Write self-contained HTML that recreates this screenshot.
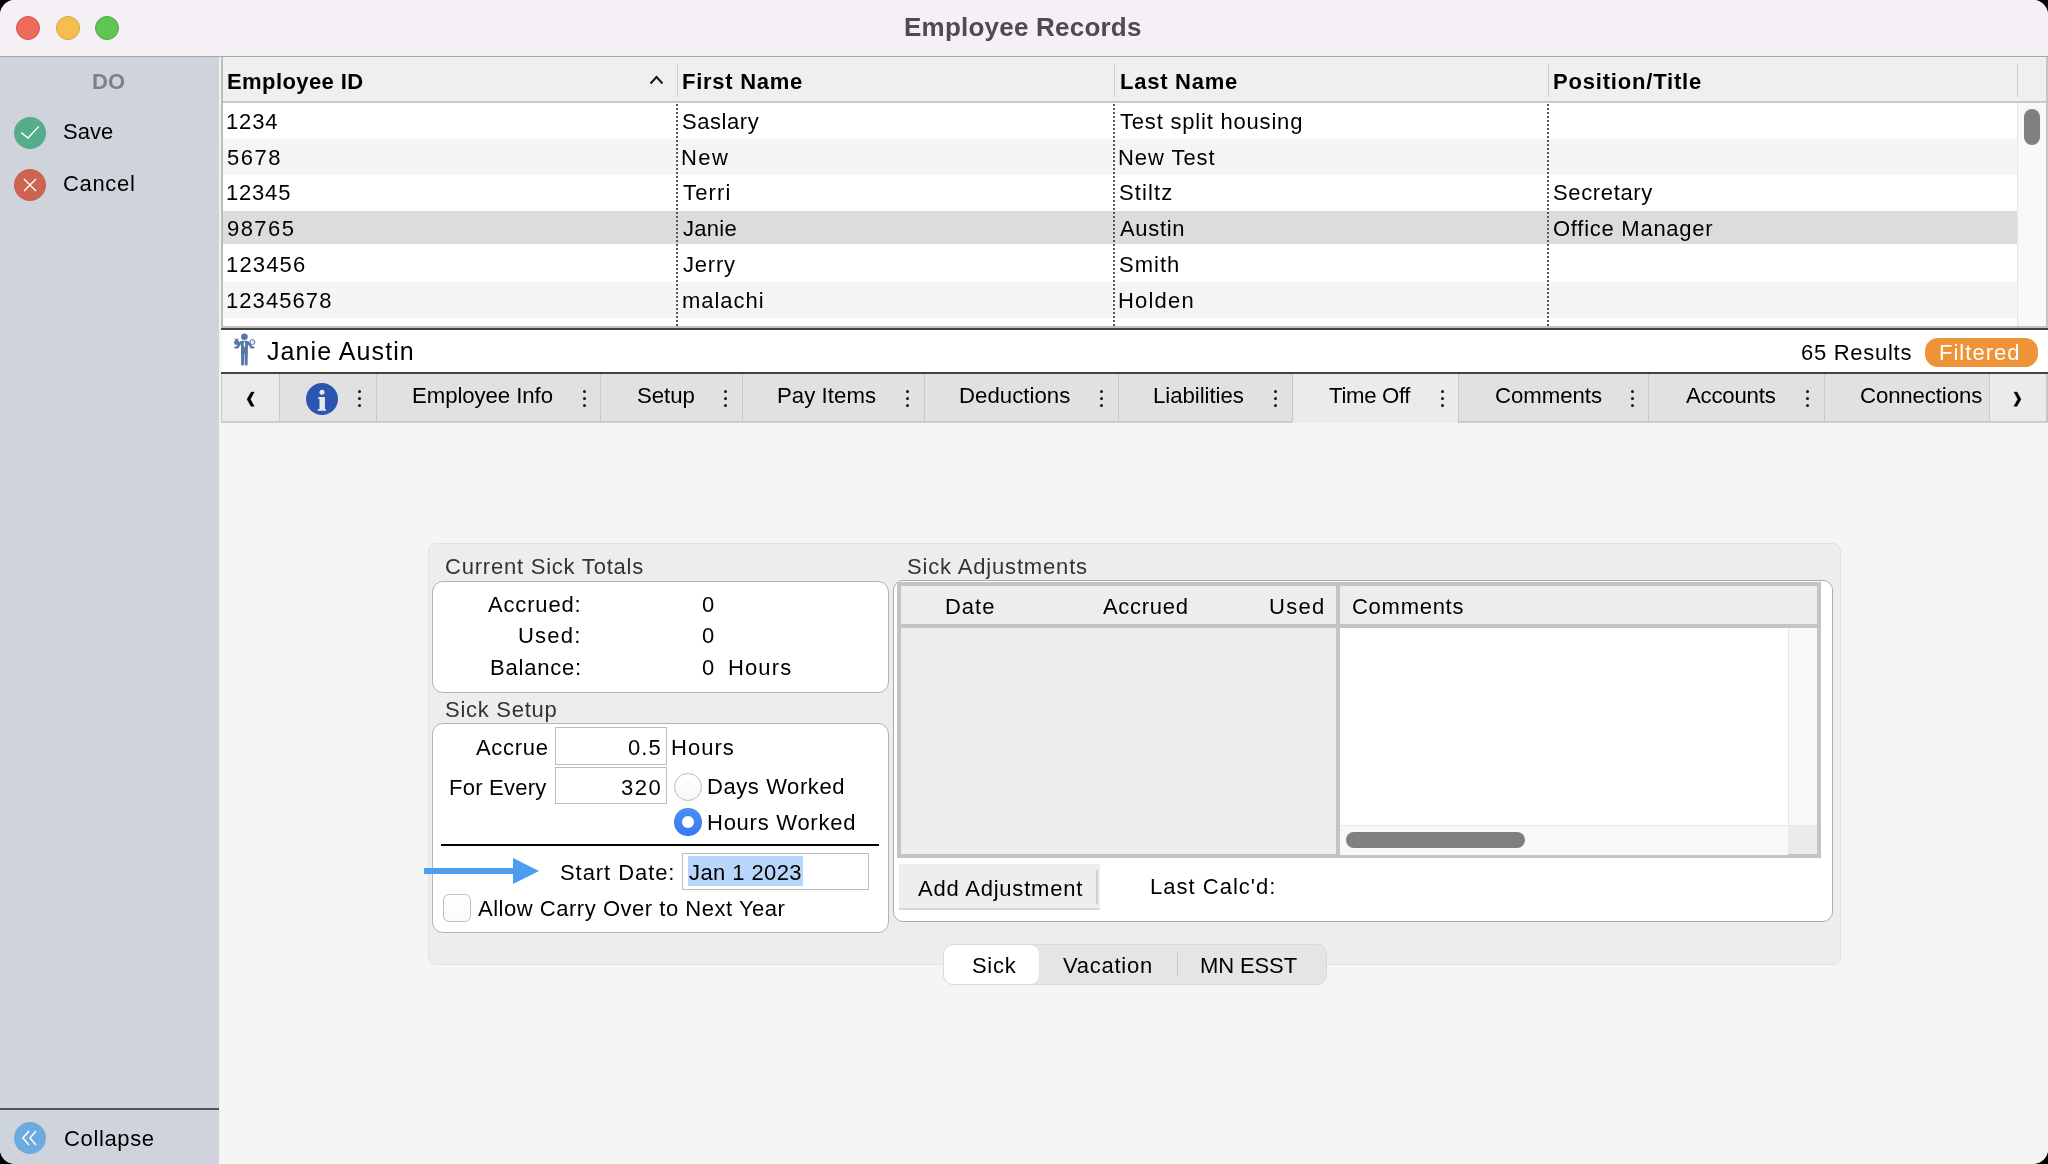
<!DOCTYPE html>
<html><head><meta charset="utf-8"><title>Employee Records</title>
<style>
html,body{margin:0;padding:0;width:2048px;height:1164px;overflow:hidden;background:#000;}
#win{position:absolute;left:0;top:0;width:2048px;height:1164px;border-radius:15px;overflow:hidden;background:#F5F5F5;}
.t{position:absolute;white-space:nowrap;line-height:1;will-change:transform;font-family:"Liberation Sans",sans-serif;}
.r{position:absolute;}
</style></head><body><div id="win">
<div class="r" style="left:0px;top:0px;width:2048px;height:56px;background:#F4F0F6;"></div>
<div class="r" style="left:0px;top:56px;width:2048px;height:1px;background:#A5A4A8;"></div>
<div class="r" style="left:0px;top:57px;width:2048px;height:1px;background:#B9BBC0;"></div>
<div class="r" style="left:16px;top:16px;width:24px;height:24px;border-radius:50%;background:#EC6A5E;box-sizing:border-box;border:1px solid #D5574B;"></div>
<div class="r" style="left:55.5px;top:16px;width:24px;height:24px;border-radius:50%;background:#F4BF4F;box-sizing:border-box;border:1px solid #D9A53A;"></div>
<div class="r" style="left:95px;top:16px;width:24px;height:24px;border-radius:50%;background:#61C554;box-sizing:border-box;border:1px solid #4DAA40;"></div>
<div class="r" style="left:0px;top:57px;width:219px;height:1107px;background:#CFD3DC;"></div>
<div class="r" style="left:219px;top:57px;width:2px;height:1107px;background:#F2F2F4;"></div>
<svg class="r" style="left:14px;top:117px" width="32" height="32" viewBox="0 0 32 32"><circle cx="16" cy="16" r="16" fill="#57AC8B"/><path d="M7.2 15.6 L14 21 L24.8 9.4" stroke="#fff" stroke-width="1.35" fill="none"/></svg>
<svg class="r" style="left:14px;top:169px" width="32" height="32" viewBox="0 0 32 32"><circle cx="16" cy="16" r="16" fill="#CD6351"/><path d="M10 10 L22 22 M22 10 L10 22" stroke="#fff" stroke-width="1.35" fill="none"/></svg>
<div class="r" style="left:0px;top:1108px;width:219px;height:2px;background:#555;"></div>
<svg class="r" style="left:14px;top:1122px" width="32" height="32" viewBox="0 0 32 32"><circle cx="16" cy="16" r="16" fill="#6DABDF"/><path d="M15 9 L9 16 L15 23 M22 9 L16 16 L22 23" stroke="#fff" stroke-width="1.5" fill="none"/></svg>
<div class="r" style="left:221px;top:57px;width:1827px;height:1107px;background:#F5F5F5;"></div>
<div class="r" style="left:221px;top:57px;width:1827px;height:271px;background:#FFFFFF;"></div>
<div class="r" style="left:221px;top:57px;width:2px;height:271px;background:#BDBDBD;"></div>
<div class="r" style="left:2046px;top:57px;width:2px;height:271px;background:#C4C4C4;"></div>
<div class="r" style="left:223px;top:57px;width:1823px;height:45px;background:#EFEFEF;"></div>
<div class="r" style="left:223px;top:101px;width:1823px;height:2px;background:#C8C8C8;"></div>
<div class="r" style="left:677px;top:64px;width:1px;height:33px;background:#CDCDCD;"></div>
<div class="r" style="left:1114px;top:64px;width:1px;height:33px;background:#CDCDCD;"></div>
<div class="r" style="left:1548px;top:64px;width:1px;height:33px;background:#CDCDCD;"></div>
<div class="r" style="left:2017px;top:64px;width:1px;height:33px;background:#CDCDCD;"></div>
<svg class="r" style="left:649px;top:74.5px" width="15" height="10" viewBox="0 0 15 10"><path d="M1.5 8.5 L7.5 2 L13.5 8.5" stroke="#111" stroke-width="1.9" fill="none"/></svg>
<div class="r" style="left:223px;top:139px;width:1794px;height:36px;background:#F4F5F5;"></div>
<div class="r" style="left:223px;top:211px;width:1794px;height:33px;background:#DCDCDC;"></div>
<div class="r" style="left:223px;top:282px;width:1794px;height:36px;background:#F4F5F5;"></div>
<div class="r" style="left:676px;top:104px;width:2px;height:222px;background:repeating-linear-gradient(to bottom,#575757 0 2px,transparent 2px 4px);"></div>
<div class="r" style="left:1113px;top:104px;width:2px;height:222px;background:repeating-linear-gradient(to bottom,#575757 0 2px,transparent 2px 4px);"></div>
<div class="r" style="left:1547px;top:104px;width:2px;height:222px;background:repeating-linear-gradient(to bottom,#575757 0 2px,transparent 2px 4px);"></div>
<div class="r" style="left:2017px;top:103px;width:29px;height:225px;background:#F8F8F8;"></div>
<div class="r" style="left:2017px;top:103px;width:1px;height:225px;background:#E6E6E6;"></div>
<div class="r" style="left:2024px;top:109px;width:16px;height:36px;background:#808080;border-radius:8px;"></div>
<div class="r" style="left:223px;top:326px;width:1823px;height:2px;background:#C2C2C2;"></div>
<div class="r" style="left:221px;top:328px;width:1827px;height:2px;background:#444;"></div>
<div class="r" style="left:221px;top:330px;width:1827px;height:42px;background:#FFFFFF;"></div>
<svg class="r" style="left:230px;top:331px" width="30" height="38" viewBox="0 0 30 38"><g fill="#5577A8"><circle cx="14.4" cy="5.8" r="3.3"/><path d="M11 10 Q14.4 9.4 17.8 10 Q19.5 10.6 20.5 12.5 L22.3 15.4 L23.6 15.4 Q24.6 15.6 24.6 16.5 Q24.6 17.4 23.6 17.4 L21.3 17.4 Q20.6 17.4 20.2 16.8 L17.9 13.2 L17.9 20.5 L17.6 33.4 Q17.5 34.4 16.7 34.4 L15.6 34.4 Q14.9 34.4 14.8 33.4 L14.6 22.5 L14.2 22.5 L14 33.4 Q13.9 34.4 13.2 34.4 L12.1 34.4 Q11.3 34.4 11.2 33.4 L11 20.5 L11 13.2 L8.6 16.8 Q8.2 17.4 7.5 17.4 L5.2 17.4 Q4.2 17.4 4.2 16.5 Q4.2 15.6 5.2 15.4 L6.5 15.4 L8.3 12.5 Q9.3 10.6 11 10 Z"/><circle cx="6.6" cy="11.6" r="2.5"/><path d="M5.7 9.4 L7.5 9.4 L8.7 7.6 L7.4 8.3 L6.6 7.8 L5.8 8.3 L4.5 7.6 Z" stroke="#5577A8" stroke-width="0.3"/><circle cx="22.4" cy="11" r="2.5" fill="none" stroke="#5577A8" stroke-width="1"/><path d="M22.4 9.6 L22.4 11.2 L23.4 11.8" stroke="#5577A8" stroke-width="0.6" fill="none"/></g><path d="M14.4 10.6 L15.2 12 L14.9 15.5 L14.4 16.6 L13.9 15.5 L13.6 12 Z" fill="#fff"/></svg>
<div class="r" style="left:1924.5px;top:338px;width:113px;height:29px;background:#EE9437;border-radius:13px;"></div>
<div class="r" style="left:221px;top:372px;width:1827px;height:2px;background:#444;"></div>
<div class="r" style="left:221px;top:374px;width:1827px;height:48px;background:#E1E1E1;"></div>
<div class="r" style="left:221px;top:421px;width:1827px;height:2px;background:#CCCCCC;"></div>
<div class="r" style="left:221px;top:374px;width:58px;height:47px;background:#EBEBEB;"></div>
<div class="r" style="left:1989px;top:374px;width:57px;height:47px;background:#EBEBEB;"></div>
<div class="r" style="left:1292px;top:374px;width:166px;height:49px;background:#EBEBEB;"></div>
<div class="r" style="left:2046px;top:374px;width:2px;height:49px;background:#C8C8C8;"></div>
<div class="r" style="left:221px;top:374px;width:1px;height:48px;background:#CACACA;"></div>
<div class="r" style="left:279px;top:374px;width:1px;height:48px;background:#CACACA;"></div>
<div class="r" style="left:376px;top:374px;width:1px;height:48px;background:#CACACA;"></div>
<div class="r" style="left:600px;top:374px;width:1px;height:48px;background:#CACACA;"></div>
<div class="r" style="left:742px;top:374px;width:1px;height:48px;background:#CACACA;"></div>
<div class="r" style="left:924px;top:374px;width:1px;height:48px;background:#CACACA;"></div>
<div class="r" style="left:1118px;top:374px;width:1px;height:48px;background:#CACACA;"></div>
<div class="r" style="left:1292px;top:374px;width:1px;height:48px;background:#CACACA;"></div>
<div class="r" style="left:1458px;top:374px;width:1px;height:48px;background:#CACACA;"></div>
<div class="r" style="left:1648px;top:374px;width:1px;height:48px;background:#CACACA;"></div>
<div class="r" style="left:1824px;top:374px;width:1px;height:48px;background:#CACACA;"></div>
<div class="r" style="left:1989px;top:374px;width:1px;height:48px;background:#CACACA;"></div>
<svg class="r" style="left:244px;top:390px" width="14" height="20" viewBox="0 0 14 20"><path d="M7.2 2 L10.2 2 L6.4 9.3 L10.2 16.3 L7 16.3 L3 9.3 Z" fill="#000" stroke="#000" stroke-width="0.4" stroke-linejoin="round"/></svg>
<svg class="r" style="left:2010px;top:390px" width="14" height="20" viewBox="0 0 14 20"><path d="M4 2 L7 2 L11 9.3 L7 16.3 L3.8 16.3 L7.8 9.3 Z" fill="#000" stroke="#000" stroke-width="0.4" stroke-linejoin="round"/></svg>
<svg class="r" style="left:306px;top:383px" width="32" height="32" viewBox="0 0 32 32"><circle cx="16" cy="16" r="16" fill="#2C55B1"/><circle cx="16" cy="9.3" r="2.5" fill="#E8E8EA"/><path d="M12.3 14 L18.9 14 L18.9 26 L20 26 L20 27.8 L11.8 27.8 L11.8 26 L13.5 26 L13.5 16 L12.3 16 Z" fill="#E8E8EA"/></svg>
<div class="r" style="left:358.1px;top:390.0px;width:3px;height:3px;background:#111;border-radius:50%;"></div>
<div class="r" style="left:358.1px;top:397.0px;width:3px;height:3px;background:#111;border-radius:50%;"></div>
<div class="r" style="left:358.1px;top:404.0px;width:3px;height:3px;background:#111;border-radius:50%;"></div>
<div class="r" style="left:582.5px;top:390.0px;width:3px;height:3px;background:#111;border-radius:50%;"></div>
<div class="r" style="left:582.5px;top:397.0px;width:3px;height:3px;background:#111;border-radius:50%;"></div>
<div class="r" style="left:582.5px;top:404.0px;width:3px;height:3px;background:#111;border-radius:50%;"></div>
<div class="r" style="left:724.2px;top:390.0px;width:3px;height:3px;background:#111;border-radius:50%;"></div>
<div class="r" style="left:724.2px;top:397.0px;width:3px;height:3px;background:#111;border-radius:50%;"></div>
<div class="r" style="left:724.2px;top:404.0px;width:3px;height:3px;background:#111;border-radius:50%;"></div>
<div class="r" style="left:905.7px;top:390.0px;width:3px;height:3px;background:#111;border-radius:50%;"></div>
<div class="r" style="left:905.7px;top:397.0px;width:3px;height:3px;background:#111;border-radius:50%;"></div>
<div class="r" style="left:905.7px;top:404.0px;width:3px;height:3px;background:#111;border-radius:50%;"></div>
<div class="r" style="left:1099.9px;top:390.0px;width:3px;height:3px;background:#111;border-radius:50%;"></div>
<div class="r" style="left:1099.9px;top:397.0px;width:3px;height:3px;background:#111;border-radius:50%;"></div>
<div class="r" style="left:1099.9px;top:404.0px;width:3px;height:3px;background:#111;border-radius:50%;"></div>
<div class="r" style="left:1274.1px;top:390.0px;width:3px;height:3px;background:#111;border-radius:50%;"></div>
<div class="r" style="left:1274.1px;top:397.0px;width:3px;height:3px;background:#111;border-radius:50%;"></div>
<div class="r" style="left:1274.1px;top:404.0px;width:3px;height:3px;background:#111;border-radius:50%;"></div>
<div class="r" style="left:1441.2px;top:390.0px;width:3px;height:3px;background:#111;border-radius:50%;"></div>
<div class="r" style="left:1441.2px;top:397.0px;width:3px;height:3px;background:#111;border-radius:50%;"></div>
<div class="r" style="left:1441.2px;top:404.0px;width:3px;height:3px;background:#111;border-radius:50%;"></div>
<div class="r" style="left:1631.0px;top:390.0px;width:3px;height:3px;background:#111;border-radius:50%;"></div>
<div class="r" style="left:1631.0px;top:397.0px;width:3px;height:3px;background:#111;border-radius:50%;"></div>
<div class="r" style="left:1631.0px;top:404.0px;width:3px;height:3px;background:#111;border-radius:50%;"></div>
<div class="r" style="left:1805.8px;top:390.0px;width:3px;height:3px;background:#111;border-radius:50%;"></div>
<div class="r" style="left:1805.8px;top:397.0px;width:3px;height:3px;background:#111;border-radius:50%;"></div>
<div class="r" style="left:1805.8px;top:404.0px;width:3px;height:3px;background:#111;border-radius:50%;"></div>
<div class="r" style="left:427.5px;top:542.5px;width:1413px;height:422px;background:#EDEDED;border:1px solid #E2E2E2;border-radius:8px;box-sizing:border-box;"></div>
<div class="r" style="left:431.5px;top:580.5px;width:457px;height:112px;background:#fff;border:1px solid #B4B4B4;border-radius:11px;box-sizing:border-box;"></div>
<div class="r" style="left:431.5px;top:723px;width:457px;height:210px;background:#fff;border:1px solid #B4B4B4;border-radius:11px;box-sizing:border-box;"></div>
<div class="r" style="left:555px;top:727px;width:112px;height:38px;background:#fff;border:1px solid #BDBDBD;box-sizing:border-box;"></div>
<div class="r" style="left:555px;top:767px;width:112px;height:37px;background:#fff;border:1px solid #BDBDBD;box-sizing:border-box;"></div>
<div class="r" style="left:674.2px;top:773px;width:27.6px;height:27.6px;background:linear-gradient(#fff,#F6F6F6);border:1.5px solid #BDBDBD;border-radius:50%;box-sizing:border-box;"></div>
<div class="r" style="left:674.3px;top:808.4px;width:27.6px;height:27.6px;background:linear-gradient(#4B8FF6,#3A77EE);border-radius:50%;"></div>
<div class="r" style="left:682.1px;top:816.2px;width:12px;height:12px;background:#fff;border-radius:50%;"></div>
<div class="r" style="left:441px;top:844px;width:438px;height:2px;background:#000;"></div>
<svg class="r" style="left:420px;top:855px" width="125" height="32" viewBox="0 0 125 32"><path d="M4 13 L94 13 L94 19 L4 19 Z" fill="#4A9DF0"/><path d="M93 3 L119 16 L93 29 Z" fill="#4A9DF0"/></svg>
<div class="r" style="left:682px;top:852.5px;width:187px;height:37px;background:#fff;border:1px solid #BDBDBD;box-sizing:border-box;"></div>
<div class="r" style="left:688px;top:856px;width:115px;height:30px;background:#B8D6FA;"></div>
<div class="r" style="left:443px;top:894px;width:28px;height:28px;background:linear-gradient(#fff,#FAFAFA);border:1.2px solid #BFBFBF;border-radius:6px;box-sizing:border-box;"></div>
<div class="r" style="left:893px;top:580px;width:940px;height:342px;background:#fff;border:1px solid #ABABAB;border-radius:10px;box-sizing:border-box;"></div>
<div class="r" style="left:897px;top:582px;width:924px;height:276px;background:#C4C4C4;"></div>
<div class="r" style="left:900.5px;top:585.5px;width:435.5px;height:38.5px;background:#EDEDED;"></div>
<div class="r" style="left:1340px;top:585.5px;width:477px;height:38.5px;background:#EDEDED;"></div>
<div class="r" style="left:900.5px;top:628px;width:435.5px;height:226px;background:#EDEDED;"></div>
<div class="r" style="left:1340px;top:628px;width:477px;height:226px;background:#FFFFFF;"></div>
<div class="r" style="left:1788px;top:628px;width:29px;height:197px;background:#F8F8F8;"></div>
<div class="r" style="left:1788px;top:628px;width:1px;height:197px;background:#E8E8E8;"></div>
<div class="r" style="left:1340px;top:824.5px;width:448px;height:30px;background:#F8F8F8;"></div>
<div class="r" style="left:1340px;top:824.5px;width:448px;height:1px;background:#E8E8E8;"></div>
<div class="r" style="left:1788px;top:825px;width:29px;height:29px;background:#EBEBEB;"></div>
<div class="r" style="left:1346px;top:832px;width:179px;height:16px;background:#7F7F7F;border-radius:8px;"></div>
<div class="r" style="left:899px;top:864px;width:201px;height:45.5px;background:#EEEEEE;border-bottom:2px solid #D6D6D6;box-sizing:border-box;"></div>
<div class="r" style="left:1096px;top:870px;width:2px;height:34px;background:#D0D0D0;"></div>
<div class="r" style="left:942.5px;top:944px;width:384px;height:41px;background:#E5E5E5;border:1px solid #D9D9D9;border-radius:10px;box-sizing:border-box;"></div>
<div class="r" style="left:943.5px;top:945px;width:95px;height:39px;background:#FFFFFF;border-radius:9px;"></div>
<div class="r" style="left:1176.5px;top:953px;width:1.5px;height:23px;background:#C8C8C8;"></div>
<div class="t" style="top:14.00px;font-size:26px;font-weight:700;color:#4D4B50;letter-spacing:0.22px;left:904px;">Employee Records</div>
<div class="t" style="top:71.00px;font-size:22px;font-weight:700;color:#808080;letter-spacing:0.1px;left:91.8px;">DO</div>
<div class="t" style="top:121.00px;font-size:22px;font-weight:400;color:#000;letter-spacing:0.033px;left:63.400000000000006px;">Save</div>
<div class="t" style="top:173.00px;font-size:22px;font-weight:400;color:#000;letter-spacing:0.66px;left:63.400000000000006px;">Cancel</div>
<div class="t" style="top:1128.00px;font-size:22px;font-weight:400;color:#000;letter-spacing:0.642px;left:63.5px;">Collapse</div>
<div class="t" style="top:71.00px;font-size:22px;font-weight:700;color:#000;letter-spacing:0.41px;left:226.5px;">Employee ID</div>
<div class="t" style="top:71.00px;font-size:22px;font-weight:700;color:#000;letter-spacing:0.733px;left:681.7px;">First Name</div>
<div class="t" style="top:71.00px;font-size:22px;font-weight:700;color:#000;letter-spacing:0.75px;left:1119.5px;">Last Name</div>
<div class="t" style="top:71.00px;font-size:22px;font-weight:700;color:#000;letter-spacing:0.807px;left:1552.8px;">Position/Title</div>
<div class="t" style="top:111.00px;font-size:22px;font-weight:400;color:#000;letter-spacing:0.867px;left:225.8px;">1234</div>
<div class="t" style="top:147.00px;font-size:22px;font-weight:400;color:#000;letter-spacing:1.501px;left:226.8px;">5678</div>
<div class="t" style="top:182.00px;font-size:22px;font-weight:400;color:#000;letter-spacing:0.8px;left:225.8px;">12345</div>
<div class="t" style="top:218.00px;font-size:22px;font-weight:400;color:#000;letter-spacing:1.45px;left:226.8px;">98765</div>
<div class="t" style="top:254.00px;font-size:22px;font-weight:400;color:#000;letter-spacing:1.14px;left:225.8px;">123456</div>
<div class="t" style="top:290.00px;font-size:22px;font-weight:400;color:#000;letter-spacing:1.071px;left:225.8px;">12345678</div>
<div class="t" style="top:111.00px;font-size:22px;font-weight:400;color:#000;letter-spacing:0.566px;left:681.7px;">Saslary</div>
<div class="t" style="top:147.00px;font-size:22px;font-weight:400;color:#000;letter-spacing:1.4px;left:680.7px;">New</div>
<div class="t" style="top:182.00px;font-size:22px;font-weight:400;color:#000;letter-spacing:1.175px;left:682.7px;">Terri</div>
<div class="t" style="top:218.00px;font-size:22px;font-weight:400;color:#000;letter-spacing:0.275px;left:682.7px;">Janie</div>
<div class="t" style="top:254.00px;font-size:22px;font-weight:400;color:#000;letter-spacing:0.775px;left:682.7px;">Jerry</div>
<div class="t" style="top:290.00px;font-size:22px;font-weight:400;color:#000;letter-spacing:0.967px;left:681.7px;">malachi</div>
<div class="t" style="top:111.00px;font-size:22px;font-weight:400;color:#000;letter-spacing:0.801px;left:1120.4px;">Test split housing</div>
<div class="t" style="top:147.00px;font-size:22px;font-weight:400;color:#000;letter-spacing:0.943px;left:1118.4px;">New Test</div>
<div class="t" style="top:182.00px;font-size:22px;font-weight:400;color:#000;letter-spacing:1.1px;left:1119.4px;">Stiltz</div>
<div class="t" style="top:218.00px;font-size:22px;font-weight:400;color:#000;letter-spacing:0.68px;left:1120.4px;">Austin</div>
<div class="t" style="top:254.00px;font-size:22px;font-weight:400;color:#000;letter-spacing:1.0px;left:1119.4px;">Smith</div>
<div class="t" style="top:290.00px;font-size:22px;font-weight:400;color:#000;letter-spacing:1.18px;left:1118.4px;">Holden</div>
<div class="t" style="top:182.00px;font-size:22px;font-weight:400;color:#000;letter-spacing:0.65px;left:1552.8px;">Secretary</div>
<div class="t" style="top:218.00px;font-size:22px;font-weight:400;color:#000;letter-spacing:0.738px;left:1552.8px;">Office Manager</div>
<div class="t" style="top:339.00px;font-size:25px;font-weight:400;color:#000;letter-spacing:1.081px;left:267.4px;">Janie Austin</div>
<div class="t" style="top:342.00px;font-size:22px;font-weight:400;color:#000;letter-spacing:0.723px;left:1800.8px;">65 Results</div>
<div class="t" style="top:342.00px;font-size:22px;font-weight:400;color:#fff;letter-spacing:1.014px;left:1939px;">Filtered</div>
<div class="t" style="top:385.00px;font-size:22.2px;font-weight:400;color:#000;letter-spacing:-0.067px;left:411.8px;">Employee Info</div>
<div class="t" style="top:385.00px;font-size:22.2px;font-weight:400;color:#000;letter-spacing:-0.05px;left:636.5px;">Setup</div>
<div class="t" style="top:385.00px;font-size:22.2px;font-weight:400;color:#000;letter-spacing:0.05px;left:777px;">Pay Items</div>
<div class="t" style="top:385.00px;font-size:22.2px;font-weight:400;color:#000;letter-spacing:0.033px;left:958.8px;">Deductions</div>
<div class="t" style="top:385.00px;font-size:22.2px;font-weight:400;color:#000;letter-spacing:-0.05px;left:1152.5px;">Liabilities</div>
<div class="t" style="top:385.00px;font-size:22.2px;font-weight:400;color:#000;letter-spacing:-0.328px;left:1328.8px;">Time Off</div>
<div class="t" style="top:385.00px;font-size:22.2px;font-weight:400;color:#000;letter-spacing:-0.042px;left:1494.8px;">Comments</div>
<div class="t" style="top:385.00px;font-size:22.2px;font-weight:400;color:#000;letter-spacing:-0.215px;left:1686.2px;">Accounts</div>
<div class="t" style="top:385.00px;font-size:22.2px;font-weight:400;color:#000;letter-spacing:-0.11px;left:1859.7px;">Connections</div>
<div class="t" style="top:556.00px;font-size:22px;font-weight:400;color:#333333;letter-spacing:0.778px;left:445.2px;">Current Sick Totals</div>
<div class="t" style="top:594.00px;font-size:22px;font-weight:400;color:#000;letter-spacing:0.843px;left:488px;">Accrued:</div>
<div class="t" style="top:625.00px;font-size:22px;font-weight:400;color:#000;letter-spacing:1.2px;left:518.4px;">Used:</div>
<div class="t" style="top:657.00px;font-size:22px;font-weight:400;color:#000;letter-spacing:0.785px;left:489.8px;">Balance:</div>
<div class="t" style="top:594.00px;font-size:22px;font-weight:400;color:#000;letter-spacing:0.3px;left:702px;">0</div>
<div class="t" style="top:625.00px;font-size:22px;font-weight:400;color:#000;letter-spacing:0.3px;left:702px;">0</div>
<div class="t" style="top:657.00px;font-size:22px;font-weight:400;color:#000;letter-spacing:0.3px;left:702px;">0</div>
<div class="t" style="top:657.00px;font-size:22px;font-weight:400;color:#000;letter-spacing:1.125px;left:728.3px;">Hours</div>
<div class="t" style="top:699.00px;font-size:22px;font-weight:400;color:#333333;letter-spacing:0.723px;left:445.2px;">Sick Setup</div>
<div class="t" style="top:737.00px;font-size:22px;font-weight:400;color:#000;letter-spacing:0.68px;left:475.9px;">Accrue</div>
<div class="t" style="top:737.00px;font-size:22px;font-weight:400;color:#000;letter-spacing:1.05px;left:628px;">0.5</div>
<div class="t" style="top:737.00px;font-size:22px;font-weight:400;color:#000;letter-spacing:1.025px;left:671.2px;">Hours</div>
<div class="t" style="top:777.00px;font-size:22px;font-weight:400;color:#000;letter-spacing:0.25px;left:448.8px;">For Every</div>
<div class="t" style="top:777.00px;font-size:22px;font-weight:400;color:#000;letter-spacing:1.55px;left:621px;">320</div>
<div class="t" style="top:776.00px;font-size:22px;font-weight:400;color:#000;letter-spacing:0.58px;left:707px;">Days Worked</div>
<div class="t" style="top:812.00px;font-size:22px;font-weight:400;color:#000;letter-spacing:0.745px;left:707px;">Hours Worked</div>
<div class="t" style="top:862.00px;font-size:22px;font-weight:400;color:#000;letter-spacing:0.93px;left:560.4px;">Start Date:</div>
<div class="t" style="top:862.00px;font-size:22px;font-weight:400;color:#000;letter-spacing:0.411px;left:689px;">Jan 1 2023</div>
<div class="t" style="top:898.00px;font-size:22px;font-weight:400;color:#000;letter-spacing:0.526px;left:478.4px;">Allow Carry Over to Next Year</div>
<div class="t" style="top:556.00px;font-size:22px;font-weight:400;color:#333333;letter-spacing:0.84px;left:906.5px;">Sick Adjustments</div>
<div class="t" style="top:596.00px;font-size:22px;font-weight:400;color:#000;letter-spacing:0.967px;left:945px;">Date</div>
<div class="t" style="top:596.00px;font-size:22px;font-weight:400;color:#000;letter-spacing:0.701px;left:1102.7px;">Accrued</div>
<div class="t" style="top:596.00px;font-size:22px;font-weight:400;color:#000;letter-spacing:1.267px;left:1269px;">Used</div>
<div class="t" style="top:596.00px;font-size:22px;font-weight:400;color:#000;letter-spacing:0.729px;left:1351.7px;">Comments</div>
<div class="t" style="top:878.00px;font-size:22px;font-weight:400;color:#000;letter-spacing:0.785px;left:917.5px;">Add Adjustment</div>
<div class="t" style="top:876.00px;font-size:22px;font-weight:400;color:#000;letter-spacing:1.018px;left:1150.2px;">Last Calc'd:</div>
<div class="t" style="top:955.00px;font-size:22px;font-weight:400;color:#000;letter-spacing:0.7px;left:971.8px;">Sick</div>
<div class="t" style="top:955.00px;font-size:22px;font-weight:400;color:#000;letter-spacing:0.743px;left:1063px;">Vacation</div>
<div class="t" style="top:955.00px;font-size:22px;font-weight:400;color:#000;letter-spacing:-0.117px;left:1200.2px;">MN ESST</div>
</div></body></html>
